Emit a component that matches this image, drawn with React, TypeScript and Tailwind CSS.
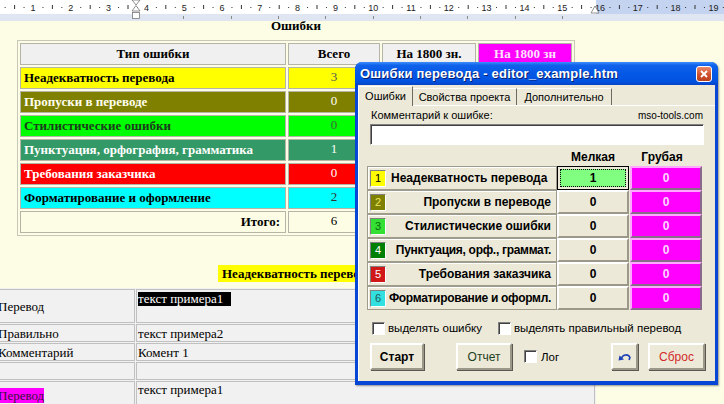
import React from "react";

const serif = "font-['Liberation_Serif','Times_New_Roman',serif]";
const sans = "font-['Liberation_Sans',Arial,sans-serif]";

const summary = [
  { label: "Неадекватность перевода", n: "3", bg: "bg-[#ffff00]", text: "text-black", num: "text-[#555]" },
  { label: "Пропуски в переводе", n: "0", bg: "bg-[#808000]", text: "text-[#fffff0]", num: "text-white" },
  { label: "Стилистические ошибки", n: "0", bg: "bg-[#00ff00]", text: "text-[#1c3d1c]", num: "text-[#3c6c3c]" },
  { label: "Пунктуация, орфография, грамматика", n: "1", bg: "bg-[#339966]", text: "text-white", num: "text-white" },
  { label: "Требования заказчика", n: "0", bg: "bg-[#ff0000]", text: "text-white", num: "text-white" },
  { label: "Форматирование и оформление", n: "2", bg: "bg-[#00ffff]", text: "text-black", num: "text-[#333]" },
];

const errorRows = [
  { n: "1", label: "Неадекватность перевода", sq: "bg-[#ffff00] text-black" },
  { n: "2", label: "Пропуски в переводе", sq: "bg-[#808000] text-[#e8e860]" },
  { n: "3", label: "Стилистические ошибки", sq: "bg-[#33e033] text-[#0b6b0b]" },
  { n: "4", label: "Пунктуация, орф., граммат.", sq: "bg-[#008000] text-white" },
  { n: "5", label: "Требования заказчика", sq: "bg-[#d01818] text-white" },
  { n: "6", label: "Форматирование и оформл.", sq: "bg-[#33e0e0] text-[#1a5a5a]" },
];

function Ruler() {
  const step = 37.8;
  const x0 = 33;
  const marks: React.ReactNode[] = [];
  for (let i = 0; i < 20; i++) {
    const base = x0 + (i - 1) * step;
    marks.push(<rect key={`d1${i}`} x={base + step * 0.25} y={7} width={1} height={1} fill="#333" />);
    marks.push(<rect key={`t${i}`} x={base + step * 0.5} y={5} width={1} height={4} fill="#333" />);
    marks.push(<rect key={`d2${i}`} x={base + step * 0.75} y={7} width={1} height={1} fill="#333" />);
  }
  const stops = [183, 231, 278, 325, 373, 420, 467, 515, 562];
  return (
    <svg width="724" height="21" className="block">
      <rect x={0} y={0} width={596} height={14} fill="#ffffff" />
      <rect x={596} y={0} width={128} height={14} fill="#c4d3ef" />
      <rect x={0} y={14} width={724} height={7} fill="#dfe6f1" />
      {marks}
      {Array.from({ length: 19 }, (_, i) => (
        <text
          key={i}
          x={x0 + i * step}
          y={11}
          fontSize={9}
          textAnchor="middle"
          fill="#222"
          fontFamily="Liberation Sans, Arial, sans-serif"
        >
          {i + 1}
        </text>
      ))}
      {stops.map((x) => (
        <rect key={x} x={x} y={16} width={1} height={3} fill="#8a8a8a" />
      ))}
      <polygon points="132,0 140,0 136,5" fill="#fff" stroke="#777" strokeWidth="0.8" />
      <polygon points="132,11 140,11 136,5.5" fill="#fff" stroke="#777" strokeWidth="0.8" />
      <rect x={132.5} y={12.5} width={7} height={6} fill="#fff" stroke="#777" strokeWidth="0.8" />
      <polygon points="591,13 599,13 595,6" fill="#fff" stroke="#777" strokeWidth="0.8" />
    </svg>
  );
}

function CheckBox({ className = "" }: { className?: string }) {
  return (
    <div
      className={`h-[13px] w-[13px] shrink-0 border border-t-[#808080] border-l-[#808080] border-b-white border-r-white bg-white shadow-[inset_1px_1px_0_#404040] ${className}`}
    />
  );
}

function Btn({ children, className = "" }: { children: React.ReactNode; className?: string }) {
  return (
    <div
      className={`flex h-[27px] items-center justify-center border-2 border-t-white border-l-white border-b-[#9b988a] border-r-[#9b988a] bg-[#ece9d8] text-[12px] shadow-[1px_1px_0_#5a5850] ${className}`}
    >
      {children}
    </div>
  );
}

function UndoIcon() {
  return (
    <svg width="14" height="10" viewBox="0 0 14 10">
      <path d="M3.5 6 C5 2.5 10 1.5 12 5.5 L11 8" fill="none" stroke="#1c3fb8" strokeWidth="1.6" />
      <polygon points="0.5,8.5 1.5,3.5 6,7.5" fill="#1c3fb8" />
    </svg>
  );
}

function Dialog() {
  return (
    <div
      className={`absolute left-[355px] top-[62px] flex h-[323px] w-[363px] flex-col rounded-t-[7px] bg-[#0846d6] shadow-[1px_1px_2px_rgba(0,0,0,0.4)] ${sans}`}
    >
      <div className="flex h-[23px] items-center justify-between rounded-t-[7px] bg-[linear-gradient(to_bottom,#3d8fff_0%,#1162ea_14%,#0458e6_50%,#0252e0_85%,#0644c6_100%)] pl-[5px] pr-[6px]">
        <span className="text-[13px] font-bold tracking-[0.2px] text-white [text-shadow:1px_1px_0_#0a1f6e]">
          Ошибки перевода - editor_example.htm
        </span>
        <div className="flex h-[16px] w-[16px] items-center justify-center rounded-[3px] border border-white bg-[linear-gradient(to_bottom,#ea8a6a,#d0502c_55%,#b8401e)]">
          <svg width="8" height="8" viewBox="0 0 8 8">
            <path d="M1 1 L7 7 M7 1 L1 7" stroke="#fff" strokeWidth="1.8" />
          </svg>
        </div>
      </div>

      <div className="flex flex-1 px-[3px] pb-[4px]">
        <div className="flex flex-1 flex-col bg-[#ece9d8] text-[11px] text-black">
          {/* tabs */}
          <div className="flex h-[20px] items-end">
            <div className="relative z-10 mb-[-1px] flex h-[20px] w-[55px] items-center justify-center rounded-tl-[2px] border-l border-t border-r border-l-white border-t-white border-r-[#6d6b60] bg-[#ece9d8] pb-[1px]">
              Ошибки
            </div>
            <div className="flex h-[17px] w-[104px] items-center justify-center border-t border-r border-t-white border-r-[#6d6b60]">
              Свойства проекта
            </div>
            <div className="flex h-[17px] w-[95px] items-center justify-center border-t border-r border-t-white border-r-[#6d6b60]">
              Дополнительно
            </div>
          </div>

          {/* panel */}
          <div className="flex flex-1 flex-col border-l border-t border-l-white border-t-white">
            <div className="mt-[3px] flex h-[13px] items-end justify-between pl-[12px] pr-[12px] leading-[13px]">
              <span className="text-[11px]">Комментарий к ошибке:</span>
              <span className="text-[10px]">mso-tools.com</span>
            </div>
            <div className="ml-[11px] mt-[2px] h-[21px] w-[334px] border border-t-[#808080] border-l-[#808080] border-b-white border-r-white bg-white shadow-[inset_1px_1px_0_#404040]" />

            <div className="flex h-[21px] items-end pb-[2px] text-[12px] font-bold leading-[14px]">
              <span className="ml-[198px] w-[72px] text-center">Мелкая</span>
              <span className="ml-[1px] w-[64px] text-center">Грубая</span>
            </div>

            <div className="ml-[8px] flex flex-col">
              {errorRows.map((r, i) => (
                <div key={r.n} className="flex h-[24px]">
                  <div className="flex w-[190px] items-center border border-[#a09c8c] pl-[2px] pr-[5px] shadow-[inset_1px_1px_0_#fff]">
                    <div
                      className={`flex h-[17px] w-[16px] shrink-0 items-center justify-center border border-t-[#808080] border-l-[#808080] border-b-white border-r-white text-[11px] ${r.sq}`}
                    >
                      {r.n}
                    </div>
                    <span
                      className={`text-[12px] font-bold whitespace-nowrap ${i === 0 ? "ml-[5px]" : "ml-auto"} ${r.n === "4" || r.n === "6" ? "tracking-[-0.3px]" : ""}`}
                    >
                      {r.label}
                    </span>
                  </div>
                  {i === 0 ? (
                    <div className="w-[72px] border border-black bg-[#ece9d8] p-[2px]">
                      <div className="flex h-full items-center justify-center border border-dotted border-black bg-[#80ff80] text-[12px] font-bold">
                        1
                      </div>
                    </div>
                  ) : (
                    <div className="flex w-[72px] items-center justify-center border-2 border-t-white border-l-white border-b-[#9b988a] border-r-[#9b988a] text-[12px] font-bold">
                      0
                    </div>
                  )}
                  <div className="ml-[1px] flex w-[72px] items-center justify-center border-2 border-t-[#ffa8ff] border-l-[#ffa8ff] border-b-[#8a6a8a] border-r-[#8a6a8a] bg-[#ff00ff] text-[12px] font-bold text-[#ffd8ff]">
                    0
                  </div>
                </div>
              ))}
            </div>

            <div className="ml-[13px] mt-[12px] flex h-[13px] items-center text-[11.5px]">
              <div className="flex w-[126px] items-center">
                <CheckBox />
                <span className="ml-[3px]">выделять ошибку</span>
              </div>
              <CheckBox />
              <span className="ml-[3px]">выделять правильный перевод</span>
            </div>

            <div className="mt-[8px] flex items-center pl-[11px] pr-[10px]">
              <Btn className="w-[54px] font-bold">Старт</Btn>
              <Btn className="ml-[32px] w-[56px] text-[#1e401e]">Отчет</Btn>
              <CheckBox className="ml-[12px]" />
              <span className="ml-[4px] mt-[3px] text-[11.5px]">Лог</span>
              <div className="flex-1" />
              <Btn className="w-[27px]">
                <UndoIcon />
              </Btn>
              <Btn className="ml-[10px] w-[57px] text-[#d42a2a]">Сброс</Btn>
            </div>
          </div>
        </div>
      </div>
    </div>
  );
}

export default function App() {
  const cell = "h-[22px] border border-[#b4b4a8] p-0 leading-[16px]";
  return (
    <div className="relative h-[404px] w-[724px] overflow-hidden bg-[#fdfde6]">
      <Ruler />
      <div className={`pl-[17px] ${serif}`}>
        <div className="h-[19px] w-[558px] text-center text-[13px] font-bold leading-[10px]">Ошибки</div>
        <table className="w-[558px] table-fixed border-separate border-spacing-[2px] border border-[#c8c8b8] text-[13px]">
          <colgroup>
            <col className="w-[266px]" />
            <col className="w-[92px]" />
            <col className="w-[94px]" />
            <col className="w-[94px]" />
          </colgroup>
          <tbody>
            <tr>
              <td className={`${cell} bg-[#f0f0f0] text-center font-bold`}>Тип ошибки</td>
              <td className={`${cell} bg-[#f0f0f0] text-center font-bold`}>Всего</td>
              <td className={`${cell} bg-[#f0f0f0] text-center font-bold`}>На 1800 зн.</td>
              <td className={`${cell} bg-[#ff00ff] text-center font-bold text-[#ffe0ff]`}>На 1800 зн</td>
            </tr>
            {summary.map((r) => (
              <tr key={r.label}>
                <td className={`${cell} pl-[3px] font-bold whitespace-nowrap ${r.bg} ${r.text}`}>{r.label}</td>
                <td className={`${cell} pb-[2px] text-center ${r.bg} ${r.num}`}>{r.n}</td>
                <td className={`${cell} ${r.bg}`} />
                <td className={`${cell} ${r.bg}`} />
              </tr>
            ))}
            <tr>
              <td className={`${cell} pr-[5px] text-right font-bold`}>Итого:</td>
              <td className={`${cell} pb-[2px] text-center`}>6</td>
              <td className={cell} />
              <td className={cell} />
            </tr>
          </tbody>
        </table>
      </div>

      <div className={`mt-[29px] flex h-[17px] pl-[218px] ${serif}`}>
        <span className="whitespace-nowrap bg-[#ffff00] px-[4px] text-[13px] font-bold leading-[17px]">
          Неадекватность перевода
        </span>
      </div>

      <table
        className={`ml-[-5px] mt-[6px] w-[601px] table-fixed border-separate border-spacing-[1px] bg-[#f1f1f1] text-[13px] leading-[15px] text-black ${serif}`}
      >
        <colgroup>
          <col className="w-[139px]" />
          <col />
        </colgroup>
        <tbody>
          <tr>
            <td className="h-[34px] border border-[#c0c0c0] p-0 pl-[1px] align-middle">Перевод</td>
            <td className="h-[34px] border border-[#c0c0c0] p-0 align-top">
              <span className="ml-[1px] mt-[2px] inline-block bg-black pr-[8px] leading-[14px] text-white">текст примера1</span>
            </td>
          </tr>
          <tr>
            <td className="h-[18px] border border-[#c0c0c0] p-0 pl-[1px]">Правильно</td>
            <td className="h-[18px] border border-[#c0c0c0] p-0 pl-[1px]">текст примера2</td>
          </tr>
          <tr>
            <td className="h-[18px] border border-[#c0c0c0] p-0 pl-[1px]">Комментарий</td>
            <td className="h-[18px] border border-[#c0c0c0] p-0 pl-[1px]">Комент 1</td>
          </tr>
          <tr>
            <td className="h-[18px] border border-[#c0c0c0] p-0" />
            <td className="h-[18px] border border-[#c0c0c0] p-0" />
          </tr>
          <tr>
            <td className="h-[34px] border border-[#c0c0c0] p-0 pl-[1px] pt-[6px] align-top">
              <span className="bg-[#ff00ff] text-[#3a1040]">Перевод</span>
            </td>
            <td className="h-[34px] border border-[#c0c0c0] p-0 pl-[1px] align-top">текст примера1</td>
          </tr>
        </tbody>
      </table>

      <Dialog />
    </div>
  );
}
